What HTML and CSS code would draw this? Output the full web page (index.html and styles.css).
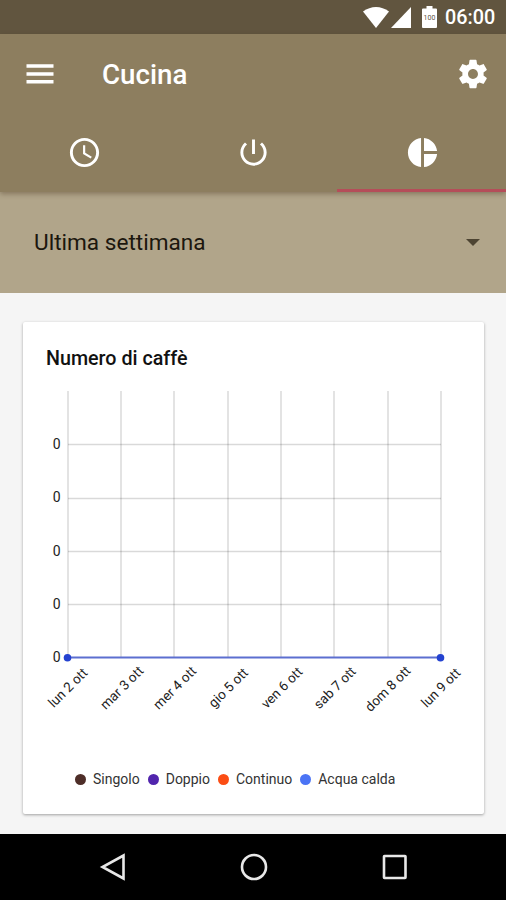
FILE: index.html
```html
<!DOCTYPE html>
<html lang="it">
<head>
  <meta charset="UTF-8" />
  <meta name="viewport" content="width=device-width, initial-scale=1.0"/>
  <title>Cucina</title>
  <link rel="stylesheet" href="styles.css">
</head>
<body>
  <div class="status-bar">
    <svg class="wifi" width="26" height="21" viewBox="0 0 26 21"><path d="M13 21 0 4.600C8-1.500 18-1.500 26 4.600z"/></svg>
    <svg class="signal" width="20" height="21" viewBox="0 0 20 21"><path d="M20 0v21H0z"/></svg>
    <svg class="battery" width="15" height="22" viewBox="0 0 15 22">
      <path d="M4.500 0h6v2.500h3.500q1 0 1 1V21q0 1-1 1H1q-1 0-1-1V3.500q0-1 1-1h3.500z"/>
      <text x="7.500" y="13.500" text-anchor="middle">100</text>
    </svg>
    <span class="time">06:00</span>
  </div>

  <header>
    <div class="toolbar">
      <button class="icon-button" aria-label="Menu">
        <svg width="36" height="36" viewBox="0 0 24 24"><path d="M3 18.300h18v-2.300H3zM3 13.100h18v-2.300H3zM3 5.500v2.300h18V5.500z"/></svg>
      </button>
      <h1>Cucina</h1>
      <button class="icon-button" aria-label="Impostazioni">
        <svg width="34" height="34" viewBox="0 0 24 24"><path d="M19.430 12.980c.04-.32.07-.64.07-.98s-.03-.66-.07-.98l2.110-1.650c.19-.15.24-.42.12-.64l-2-3.460c-.12-.22-.39-.3-.61-.22l-2.490 1c-.52-.4-1.080-.73-1.690-.98l-.38-2.650C14.460 2.180 14.250 2 14 2h-4c-.25 0-.46.18-.49.42l-.38 2.650c-.61.25-1.170.59-1.690.98l-2.490-1c-.23-.09-.49 0-.61.22l-2 3.460c-.13.22-.07.49.12.64l2.110 1.650c-.04.32-.07.65-.07.98s.03.66.07.98l-2.110 1.650c-.19.15-.24.42-.12.64l2 3.460c.12.22.39.3.61.22l2.490-1c.52.4 1.080.73 1.690.98l.38 2.650c.03.24.24.42.49.42h4c.25 0 .46-.18.49-.42l.38-2.650c.61-.25 1.170-.59 1.690-.98l2.490 1c.23.09.49 0 .61-.22l2-3.460c.12-.22.07-.49-.12-.64zM12 15.500c-1.930 0-3.500-1.570-3.500-3.500s1.570-3.500 3.500-3.500 3.500 1.570 3.500 3.500-1.570 3.500-3.500 3.500z"/></svg>
      </button>
    </div>
    <nav class="tabs">
      <a href="#orari">
        <svg width="35" height="35" viewBox="0 0 24 24"><path d="M11.990 2C6.470 2 2 6.480 2 12s4.470 10 9.990 10C17.520 22 22 17.520 22 12S17.520 2 11.990 2zM12 20c-4.420 0-8-3.580-8-8s3.580-8 8-8 8 3.580 8 8-3.580 8-8 8zm.5-13H11v6l5.250 3.150.75-1.230-4.500-2.670z"/></svg>
      </a>
      <a href="#accensione">
        <svg width="35" height="35" viewBox="0 0 24 24"><path d="M13 3h-2v10h2V3zm4.830 2.170-1.420 1.420C17.990 7.860 19 9.810 19 12c0 3.870-3.130 7-7 7s-7-3.130-7-7c0-2.190 1.010-4.140 2.580-5.420L6.170 5.170C4.230 6.820 3 9.260 3 12c0 4.970 4.030 9 9 9s9-4.030 9-9c0-2.740-1.230-5.180-3.170-6.830z"/></svg>
      </a>
      <a href="#statistiche" class="active">
        <svg width="35" height="35" viewBox="0 0 24 24"><path d="M11 2v20c-5.070-.5-9-4.790-9-10s3.930-9.500 9-10zm2.030 0v8.990H22c-.47-4.740-4.240-8.520-8.970-8.990zm0 11.010V22c4.740-.47 8.500-4.250 8.970-8.990h-8.970z"/></svg>
      </a>
    </nav>
  </header>

  <div class="period">
    <span>Ultima settimana</span>
    <svg width="14" height="7" viewBox="0 0 14 7"><path d="M0 0h14L7 7z"/></svg>
  </div>

  <main>
    <section class="card">
      <h2>Numero di caffè</h2>
      <svg class="chart" width="461" height="350" viewBox="0 0 461 350">
        <path class="grid" d="M45 11v267M98 11v267M151 11v267M205 11v267M258 11v267M311 11v267M365 11v267M418 11v267"/>
        <path class="grid" d="M45 64.500h373M45 118.500h373M45 171.500h373M45 224.500h373"/>
        <g class="y-labels">
          <text x="37.500" y="69">0</text>
          <text x="37.500" y="122">0</text>
          <text x="37.500" y="176">0</text>
          <text x="37.500" y="229">0</text>
          <text x="37.500" y="282">0</text>
        </g>
        <path class="series" d="M45 277.500h373"/>
        <circle class="point" cx="44.500" cy="277.800" r="3.800"/>
        <circle class="point" cx="417.500" cy="277.800" r="3.800"/>
        <g class="x-labels">
          <text transform="translate(48 311) rotate(-45)">lun 2 ott</text>
          <text transform="translate(102 311) rotate(-45)">mar 3 ott</text>
          <text transform="translate(155 311) rotate(-45)">mer 4 ott</text>
          <text transform="translate(208.500 311) rotate(-45)">gio 5 ott</text>
          <text transform="translate(262 311) rotate(-45)">ven 6 ott</text>
          <text transform="translate(315 311) rotate(-45)">sab 7 ott</text>
          <text transform="translate(368 312) rotate(-45)">dom 8 ott</text>
          <text transform="translate(421 311) rotate(-45)">lun 9 ott</text>
        </g>
      </svg>
      <ul class="legend">
        <li class="singolo">Singolo</li>
        <li class="doppio">Doppio</li>
        <li class="continuo">Continuo</li>
        <li class="acqua">Acqua calda</li>
      </ul>
    </section>
  </main>

  <footer>
    <svg width="34" height="34" viewBox="0 0 34 34"><path d="M27.500 5.500v23L6.500 17z"/></svg>
    <svg width="34" height="34" viewBox="0 0 34 34"><circle cx="17" cy="17" r="12"/></svg>
    <svg width="34" height="34" viewBox="0 0 34 34"><rect x="6" y="6" width="21.500" height="22" rx=".5"/></svg>
  </footer>
</body>
</html>
```

FILE: styles.css
```css
* { box-sizing: border-box; margin: 0; padding: 0; }

body {
  font-family: Roboto, sans-serif;
  background-color: #f5f5f5;
  color: #111;
  height: 900px;
  overflow: hidden;
  display: flex;
  flex-direction: column;
}

svg {
  display: block;
  flex-shrink: 0;
}

.status-bar {
  height: 34px;
  display: flex;
  align-items: center;
  justify-content: flex-end;
  padding-right: 11px;
  background-color: #61553f;
  color: #fff;
  fill: #fff;
}

.signal {
  margin-left: 2px;
}

.battery {
  margin-left: 11px;
}

.battery text {
  font-size: 7px;
  fill: #61553f;
}

.time {
  width: 50px;
  margin-left: 8px;
  font-size: 19.8px;
  font-weight: 500;
  line-height: 34px;
  padding-top: 1px;
  white-space: nowrap;
}

header {
  height: 158px;
  background-color: #8d7e5f;
  color: #fff;
  fill: #fff;
  box-shadow: 0 2px 5px rgba(70, 50, 30, 0.4);
  z-index: 1;
}

.toolbar {
  height: 79px;
  display: flex;
  align-items: center;
  padding: 0 16px 0 22px;
}

.icon-button {
  border: none;
  background: none;
  fill: #fff;
  cursor: pointer;
}

h1 {
  flex-grow: 1;
  margin-left: 44px;
  padding-top: 1px;
  font-size: 27.7px;
  font-weight: 500;
}

.tabs {
  height: 79px;
  display: grid;
  grid-template-columns: repeat(3, 1fr);
}

.tabs a {
  display: flex;
  align-items: center;
  justify-content: center;
  padding: 3px 0 0 1px;
  border-bottom: 3px solid transparent;
}

.tabs .active {
  border-bottom-color: #b54d59;
}

.period {
  height: 101px;
  display: flex;
  align-items: center;
  justify-content: space-between;
  padding: 0 26px 0 34px;
  background-color: #b1a58a;
  color: #1c170e;
  font-size: 22.6px;
  fill: #4d4432;
}

main {
  flex-grow: 1;
  padding: 29px 22px 0 23px;
}

.card {
  height: 492px;
  background-color: #fff;
  border-radius: 2px;
  box-shadow: 0 1px 3px rgba(0, 0, 0, 0.35);
}

h2 {
  height: 58px;
  padding: 25px 0 0 23px;
  font-size: 19.7px;
  font-weight: 500;
  line-height: 24px;
}

.grid {
  fill: none;
  stroke: #000;
  stroke-opacity: 0.15;
  stroke-width: 1.5;
}

.y-labels {
  font-size: 14px;
  text-anchor: end;
  fill: #222;
}

.x-labels {
  font-size: 13.5px;
  text-anchor: middle;
  fill: #222;
}

.series {
  stroke: #5c6fd0;
  stroke-width: 2;
}

.point {
  fill: #2342d0;
}

.legend {
  display: flex;
  list-style: none;
  padding: 41px 0 0 52px;
  gap: 8px;
  font-size: 14px;
  line-height: 16px;
  color: #333;
}

.legend li {
  display: flex;
  align-items: center;
  gap: 7px;
}

.legend li::before {
  content: "";
  width: 11px;
  height: 11px;
  border-radius: 50%;
}

.legend .singolo::before { background-color: #4e2e28; }
.legend .doppio::before { background-color: #5125ad; }
.legend .continuo::before { background-color: #fb4d14; }
.legend .acqua::before { background-color: #4b74f5; }

footer {
  height: 66px;
  display: flex;
  justify-content: center;
  align-items: center;
  gap: 107px;
  padding-left: 1px;
  background-color: #000;
  fill: none;
  stroke: #e8e8e8;
  stroke-width: 2.6;
}
```
